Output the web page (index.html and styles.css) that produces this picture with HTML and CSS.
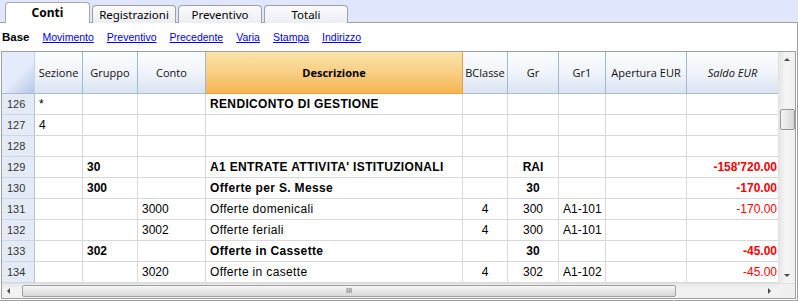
FILE: index.html
```html
<!DOCTYPE html>
<html lang="it">
<head>
    <meta charset="UTF-8">
    <title>Conti</title>
    <link rel="stylesheet" href="styles.css">
</head>
<body>
<div class="tabbar">
    <div class="tab active">Conti</div>
    <div class="tab">Registrazioni</div>
    <div class="tab">Preventivo</div>
    <div class="tab">Totali</div>
</div>

<div class="panel">
    <div class="views">
        <b>Base</b>
        <a href="#">Movimento</a>
        <a href="#">Preventivo</a>
        <a href="#">Precedente</a>
        <a href="#">Varia</a>
        <a href="#">Stampa</a>
        <a href="#">Indirizzo</a>
    </div>

    <div class="grid">
        <div class="grid-main">
            <table class="sheet">
                <colgroup>
                    <col class="c-num">
                    <col class="c-sez">
                    <col class="c-grp">
                    <col class="c-cnt">
                    <col class="c-des">
                    <col class="c-bcl">
                    <col class="c-gr">
                    <col class="c-gr1">
                    <col class="c-ape">
                    <col class="c-sal">
                </colgroup>
                <thead>
                    <tr>
                        <th class="corner"></th>
                        <th>Sezione</th>
                        <th>Gruppo</th>
                        <th>Conto</th>
                        <th class="sel">Descrizione</th>
                        <th>BClasse</th>
                        <th>Gr</th>
                        <th>Gr1</th>
                        <th>Apertura EUR</th>
                        <th class="it">Saldo EUR</th>
                    </tr>
                </thead>
                <tbody>
                    <tr>
                        <td class="num">126</td><td>*</td><td></td><td></td>
                        <td class="des title">RENDICONTO DI GESTIONE</td><td></td><td></td><td></td><td></td><td></td>
                    </tr>
                    <tr>
                        <td class="num">127</td><td>4</td><td></td><td></td>
                        <td class="des"></td><td></td><td></td><td></td><td></td><td></td>
                    </tr>
                    <tr>
                        <td class="num">128</td><td></td><td></td><td></td>
                        <td class="des"></td><td></td><td></td><td></td><td></td><td></td>
                    </tr>
                    <tr class="b">
                        <td class="num">129</td><td></td><td>30</td><td></td>
                        <td class="des">A1 ENTRATE ATTIVITA' ISTITUZIONALI</td><td class="mid"></td><td class="mid">RAI</td><td></td><td></td><td class="amt">-158'720.00</td>
                    </tr>
                    <tr class="b">
                        <td class="num">130</td><td></td><td>300</td><td></td>
                        <td class="des">Offerte per S. Messe</td><td class="mid"></td><td class="mid">30</td><td></td><td></td><td class="amt">-170.00</td>
                    </tr>
                    <tr>
                        <td class="num">131</td><td></td><td></td><td>3000</td>
                        <td class="des">Offerte domenicali</td><td class="mid">4</td><td class="mid">300</td><td>A1-101</td><td></td><td class="amt">-170.00</td>
                    </tr>
                    <tr>
                        <td class="num">132</td><td></td><td></td><td>3002</td>
                        <td class="des">Offerte feriali</td><td class="mid">4</td><td class="mid">300</td><td>A1-101</td><td></td><td class="amt"></td>
                    </tr>
                    <tr class="b">
                        <td class="num">133</td><td></td><td>302</td><td></td>
                        <td class="des">Offerte in Cassette</td><td class="mid"></td><td class="mid">30</td><td></td><td></td><td class="amt">-45.00</td>
                    </tr>
                    <tr>
                        <td class="num">134</td><td></td><td></td><td>3020</td>
                        <td class="des">Offerte in casette</td><td class="mid">4</td><td class="mid">302</td><td>A1-102</td><td></td><td class="amt">-45.00</td>
                    </tr>
                </tbody>
            </table>

            <div class="vscroll">
                <div class="arrow up"></div>
                <div class="vtrack">
                    <div class="vthumb"></div>
                </div>
                <div class="arrow down"></div>
            </div>
        </div>

        <div class="hscroll">
            <div class="harrow left"></div>
            <div class="hthumb"><span class="grip">III</span></div>
            <div class="htrack"></div>
            <div class="harrow right"></div>
            <div class="hcorner"></div>
        </div>
    </div>
</div>
</body>
</html>
```

FILE: styles.css
```css
body {
    margin: 0;
    width: 798px;
    height: 301px;
    overflow: hidden;
    background: #fff;
    font-family: "Liberation Sans", Arial, sans-serif;
    font-size: 12px;
    color: #000;
}

/* tabs */
.tabbar {
    display: flex;
    align-items: flex-end;
    gap: 2px;
    height: 23px;
    padding-left: 5px;
    background: #dfe6fd;
    border-bottom: 1px solid #a0a0a0;
    box-sizing: border-box;
}
.tab {
    width: 84px;
    height: 18px;
    margin-bottom: -1px;
    box-sizing: border-box;
    border: 1px solid #a0a0a0;
    border-bottom: none;
    border-radius: 4px 4px 0 0;
    background: linear-gradient(#fbfbfd, #eceef4);
    font-family: "Noto Sans", "DejaVu Sans", sans-serif;
    font-size: 11.5px;
    line-height: 17px;
    text-align: center;
    color: #000;
}
.tab.active {
    width: 85px;
    height: 21px;
    line-height: 20px;
    background: #fff;
    font-weight: bold;
    font-size: 12px;
    border-color: #a8a8a8;
}

/* panel */
.panel {
    height: 277px;
    border-right: 1px solid #a0a0a0;
    border-bottom: 1px solid #a0a0a0;
}
.views {
    display: flex;
    align-items: center;
    gap: 13px;
    height: 28px;
    padding-left: 2px;
    font-size: 10.5px;
}
.views b {
    font-size: 11.5px;
}
.views a {
    color: #0000ee;
    text-decoration: underline;
}

/* grid */
.grid {
    margin-left: 1px;
    width: 795px;
    border: 1px solid #a0a0a0;
    box-sizing: border-box;
}
.grid-main {
    display: flex;
}
.sheet {
    width: 776px;
    table-layout: fixed;
    border-collapse: separate;
    border-spacing: 0;
}
.c-num { width: 33px; }
.c-sez { width: 48px; }
.c-grp { width: 55px; }
.c-cnt { width: 68px; }
.c-des { width: 257px; }
.c-bcl { width: 45px; }
.c-gr  { width: 51px; }
.c-gr1 { width: 47px; }
.c-ape { width: 81px; }
.c-sal { width: 91px; }

.sheet th {
    height: 42px;
    padding: 0;
    box-sizing: border-box;
    border-right: 1px solid #9fb8d3;
    border-bottom: 1px solid #a9bcd6;
    background: linear-gradient(#fbfcff, #f2f5fb 45%, #dbe3f1);
    font-family: "Open Sans", "Noto Sans", sans-serif;
    font-size: 11px;
    font-weight: normal;
    text-align: center;
    color: #111;
    white-space: nowrap;
    overflow: hidden;
}
.sheet th.corner {
    background: linear-gradient(135deg, #e4ebfa 55%, #b7c7e6);
    border-right: 1px solid #c7d3e8;
}
.sheet th.sel {
    background: linear-gradient(#fae3a9, #f8cf84 50%, #f6b452);
    border-right: 1px solid #e9a04a;
    border-bottom-color: #f0a040;
    font-weight: bold;
    color: #000;
}
.sheet th.it {
    font-style: italic;
    border-right: none;
}

.sheet td {
    height: 21px;
    padding: 0 4px;
    box-sizing: border-box;
    border-right: 1px solid #d8d8d8;
    border-bottom: 1px solid #d8d8d8;
    white-space: nowrap;
    overflow: hidden;
}
.sheet td:last-child {
    border-right: none;
}
.sheet td.num {
    background: #e4ebf7;
    border-right: 1px solid #b4c4dc;
    border-bottom: 1px solid #cbd6e8;
    font-size: 11px;
    color: #333;
    padding-left: 5px;
}
.sheet td.des {
    letter-spacing: 0.35px;
}
.sheet td.title {
    font-weight: bold;
}
.sheet tr.b td {
    font-weight: bold;
}
.sheet tr.b td.num {
    font-weight: normal;
}
.sheet td.mid {
    text-align: center;
}
.sheet td.amt {
    text-align: right;
    color: #ff0000;
    padding-right: 1px;
}

/* vertical scrollbar */
.vscroll {
    width: 17px;
    display: flex;
    flex-direction: column;
    background: linear-gradient(90deg, #e6e6e6, #f4f4f4 40%, #f0f0f0);
    border-left: 1px solid #e2e2e2;
    box-sizing: border-box;
}
.arrow {
    height: 17px;
    position: relative;
}
.arrow::after {
    content: "";
    position: absolute;
    left: 5px;
    border-left: 3px solid transparent;
    border-right: 3px solid transparent;
}
.arrow.up::after {
    top: 6px;
    border-bottom: 3px solid #4a4a4a;
}
.arrow.down::after {
    top: 8px;
    border-top: 3px solid #4a4a4a;
}
.vtrack {
    flex: 1;
}
.vthumb {
    margin: 40px 0 0 1px;
    width: 13px;
    height: 19px;
    border: 1px solid #979797;
    border-radius: 2px;
    background: linear-gradient(90deg, #f4f4f4, #e6e6e6 50%, #d6d6d6);
}

/* horizontal scrollbar */
.hscroll {
    display: flex;
    align-items: center;
    height: 14px;
    background: linear-gradient(#e8e8e8, #f3f3f3 40%, #f0f0f0);
    border-top: 1px solid #e2e2e2;
}
.harrow {
    width: 18px;
    height: 14px;
    position: relative;
}
.harrow::after {
    content: "";
    position: absolute;
    top: 4px;
    border-top: 3px solid transparent;
    border-bottom: 3px solid transparent;
}
.harrow.left::after {
    left: 5px;
    border-right: 3px solid #4a4a4a;
}
.harrow.right::after {
    left: 8px;
    border-left: 3px solid #4a4a4a;
}
.hthumb {
    width: 654px;
    height: 12px;
    margin-left: 2px;
    border: 1px solid #a0a0a0;
    border-radius: 2px;
    box-sizing: border-box;
    background: linear-gradient(#f6f6f6, #e8e8e8 50%, #d8d8d8);
    display: flex;
    align-items: center;
    justify-content: center;
}
.grip {
    font-family: "DejaVu Sans", sans-serif;
    font-size: 7px;
    line-height: 7px;
    color: #555;
}
.htrack {
    flex: 1;
}
.hcorner {
    width: 17px;
    height: 14px;
    background: #f0f0f0;
}
```
